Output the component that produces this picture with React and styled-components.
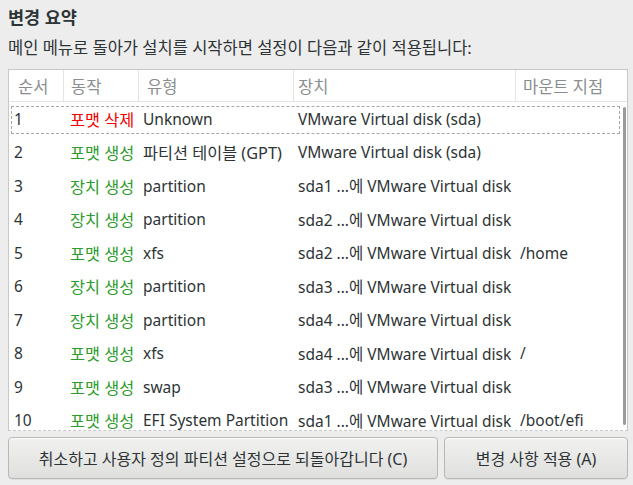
import React from "react";
import styled, { createGlobalStyle } from "styled-components";

const Global = createGlobalStyle`
  html, body { margin: 0; padding: 0; background: #ededed; }
  body {
    font-family: "Noto Sans", "Noto Sans CJK KR", sans-serif;
    color: #2e3436;
    width: 633px;
    height: 485px;
    overflow: hidden;
  }
`;

const Page = styled.div`
  display: flex;
  flex-direction: column;
  padding: 5px 5px 0 8px;
  height: 485px;
  box-sizing: border-box;
`;

const Title = styled.div`
  font-size: 17.5px;
  font-weight: bold;
  line-height: 24px;
  height: 24px;
`;

const Subtitle = styled.div`
  margin-top: 8px;
  font-size: 16.5px;
  line-height: 22px;
  height: 22px;
  color: #2e3436;
`;

const TableBox = styled.div`
  position: relative;
  margin-top: 10px;
  width: 620px;
  height: 362px;
  box-sizing: border-box;
  background: #fff;
  border: 1px solid #c8c8c6;
  border-bottom: 1px dashed #c8c8c6;
  overflow: hidden;
`;

const cols = "55px 75px 155px 222px 1fr";

const HeadRow = styled.div`
  display: grid;
  grid-template-columns: ${cols};
  height: 32px;
  border-bottom: 1px solid #e4e4e4;
  box-sizing: border-box;
`;

const HeadCell = styled.div`
  display: flex;
  align-items: center;
  padding-left: ${(p) => p.$pad || 8}px;
  font-size: 16.5px;
  color: #8b8e8f;
  border-right: ${(p) => (p.$last ? "none" : "1px solid #e4e4e4")};
`;

const Row = styled.div`
  position: relative;
  display: grid;
  grid-template-columns: ${cols};
  height: 33.5px;
  font-size: 15.5px;
  ${(p) =>
    p.$focus &&
    `&::after {
      content: "";
      position: absolute;
      left: 2px; right: 7px; top: 4px; bottom: 2px;
      border: 1px dashed #a8a8a8;
      pointer-events: none;
    }`}
`;

const Cell = styled.div`
  display: flex;
  align-items: center;
  padding-left: ${(p) => p.$pad}px;
  white-space: nowrap;
  font-size: ${(p) => (p.$ko ? "16.3px" : "inherit")};
  color: ${(p) => p.$color || "#2e3436"};
`;

const Scrollbar = styled.div`
  position: absolute;
  right: 1px;
  top: 37px;
  width: 3px;
  height: 318px;
  border-radius: 2px;
  background: #9b9c9a;
`;

const Buttons = styled.div`
  display: grid;
  grid-template-columns: 430px 184px;
  gap: 6px;
  margin-top: 6px;
`;

const Button = styled.button`
  height: 42px;
  font-family: "Noto Sans", "Noto Sans CJK KR", sans-serif;
  font-size: 16px;
  color: #2e3436;
  border: 1px solid #b7b7b4;
  border-radius: 4px;
  background: linear-gradient(#f1f1f0, #dfdfdd);
  box-shadow: inset 0 1px #fff, 0 1px rgba(0, 0, 0, 0.05);
  padding: 0;
`;

const RED = "#f40000";
const GREEN = "#2d9b2d";

const rows = [
  ["1", "포맷 삭제", RED, "Unknown", "VMware Virtual disk (sda)", ""],
  ["2", "포맷 생성", GREEN, "파티션 테이블 (GPT)", "VMware Virtual disk (sda)", ""],
  ["3", "장치 생성", GREEN, "partition", "sda1 ...에 VMware Virtual disk", ""],
  ["4", "장치 생성", GREEN, "partition", "sda2 ...에 VMware Virtual disk", ""],
  ["5", "포맷 생성", GREEN, "xfs", "sda2 ...에 VMware Virtual disk", "/home"],
  ["6", "장치 생성", GREEN, "partition", "sda3 ...에 VMware Virtual disk", ""],
  ["7", "장치 생성", GREEN, "partition", "sda4 ...에 VMware Virtual disk", ""],
  ["8", "포맷 생성", GREEN, "xfs", "sda4 ...에 VMware Virtual disk", "/"],
  ["9", "포맷 생성", GREEN, "swap", "sda3 ...에 VMware Virtual disk", ""],
  ["10", "포맷 생성", GREEN, "EFI System Partition", "sda1 ...에 VMware Virtual disk", "/boot/efi"],
];

const hasKorean = (s) => /[\uac00-\ud7a3]/.test(s);

export default function App() {
  return (
    <>
      <Global />
      <Page>
        <Title>변경 요약</Title>
        <Subtitle>메인 메뉴로 돌아가 설치를 시작하면 설정이 다음과 같이 적용됩니다:</Subtitle>
        <TableBox>
          <HeadRow>
            <HeadCell $pad={9}>순서</HeadCell>
            <HeadCell $pad={7}>동작</HeadCell>
            <HeadCell $pad={8}>유형</HeadCell>
            <HeadCell $pad={4}>장치</HeadCell>
            <HeadCell $pad={7} $last>마운트 지점</HeadCell>
          </HeadRow>
          {rows.map((r, i) => (
            <Row key={r[0]} $focus={i === 0}>
              <Cell $pad={5}>{r[0]}</Cell>
              <Cell $pad={6} $ko $color={r[2]}>{r[1]}</Cell>
              <Cell $pad={4} $ko={hasKorean(r[3])}>{r[3]}</Cell>
              <Cell $pad={4}>{r[4]}</Cell>
              <Cell $pad={4}>{r[5]}</Cell>
            </Row>
          ))}
          <Scrollbar />
        </TableBox>
        <Buttons>
          <Button>취소하고 사용자 정의 파티션 설정으로 되돌아갑니다 (C)</Button>
          <Button>변경 사항 적용 (A)</Button>
        </Buttons>
      </Page>
    </>
  );
}
